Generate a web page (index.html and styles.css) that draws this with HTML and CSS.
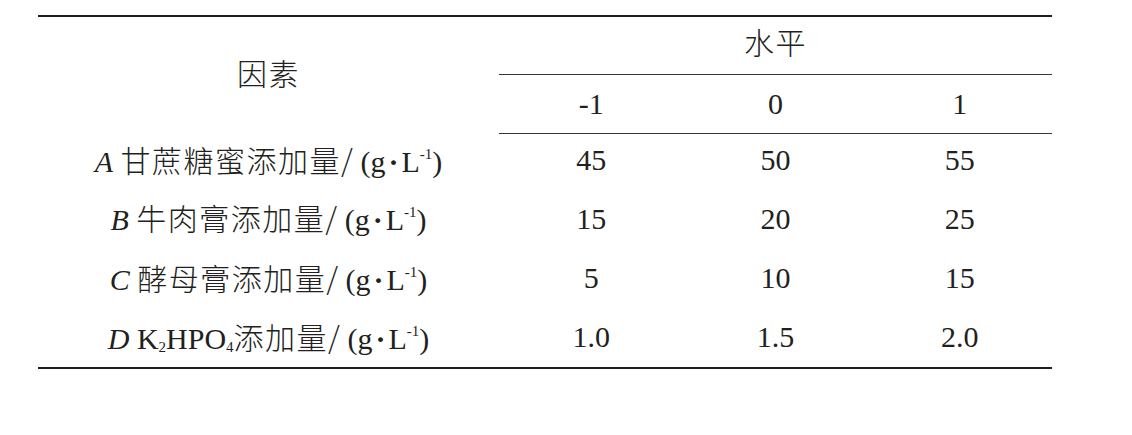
FILE: index.html
```html
<!DOCTYPE html>
<html lang="zh-CN">
<head>
  <meta charset="UTF-8">
  <meta name="viewport" content="width=device-width, initial-scale=1.0">
  <title>因素水平表</title>
  <link rel="stylesheet" href="styles.css">
</head>
<body>
  <table class="factor-table">
    <colgroup>
      <col class="col-factor">
      <col class="col-level">
      <col class="col-level">
      <col class="col-level">
    </colgroup>
    <thead>
      <tr class="head-top">
        <th rowspan="2" class="factor-title"><span class="zh">因素</span></th>
        <th colspan="3" class="level-title"><span class="zh">水平</span></th>
      </tr>
      <tr class="head-levels">
        <th>-1</th>
        <th>0</th>
        <th>1</th>
      </tr>
    </thead>
    <tbody>
      <tr>
        <td class="label"><i>A</i> <span class="zh">甘蔗糖蜜添加量/</span><span class="paren">(</span>g<span class="dot">·</span>L<sup>-1</sup>)</td>
        <td>45</td>
        <td>50</td>
        <td>55</td>
      </tr>
      <tr>
        <td class="label"><i>B</i> <span class="zh">牛肉膏添加量/</span><span class="paren">(</span>g<span class="dot">·</span>L<sup>-1</sup>)</td>
        <td>15</td>
        <td>20</td>
        <td>25</td>
      </tr>
      <tr>
        <td class="label"><i>C</i> <span class="zh">酵母膏添加量/</span><span class="paren">(</span>g<span class="dot">·</span>L<sup>-1</sup>)</td>
        <td>5</td>
        <td>10</td>
        <td>15</td>
      </tr>
      <tr>
        <td class="label"><i>D</i> K<sub>2</sub>HPO<sub>4</sub><span class="zh">添加量/</span><span class="paren">(</span>g<span class="dot">·</span>L<sup>-1</sup>)</td>
        <td>1.0</td>
        <td>1.5</td>
        <td>2.0</td>
      </tr>
    </tbody>
  </table>
</body>
</html>
```

FILE: styles.css
```css
* {
  box-sizing: border-box;
}
html, body {
  margin: 0;
  padding: 0;
  background: #fff;
}
body {
  padding: 15px 0 0 38px;
  font-family: "Liberation Serif", "Noto Sans CJK SC", serif;
  font-size: 30px;
  color: #231f20;
}

.factor-table {
  width: 1014px;
  border-collapse: collapse;
  table-layout: fixed;
  border-top: 2px solid #231f20;
  border-bottom: 2px solid #231f20;
}

.col-factor {
  width: 461px;
}

.factor-table th,
.factor-table td {
  padding: 0;
  text-align: center;
  font-weight: normal;
  line-height: 1;
  white-space: nowrap;
}

.zh {
  font-family: "Noto Sans CJK SC", sans-serif;
  font-weight: 300;
  letter-spacing: 1.5px;
}

/* 表头 */
.head-top th {
  height: 58px;
}
.factor-title {
  padding-bottom: 4px !important;
}
.level-title {
  padding-bottom: 6px !important;
  border-bottom: 1px solid #3a3637;
}
.head-levels th {
  height: 59px;
  border-bottom: 1px solid #3a3637;
}

/* 数据行 */
.factor-table tbody td {
  height: 59.5px;
}
.factor-table tbody tr:first-child td {
  height: 56px;
  padding-bottom: 2px;
}

.label i {
  font-style: italic;
}
.label sup,
.label sub {
  font-size: 15px;
  line-height: 0;
}
.label sup {
  vertical-align: 13px;
}
.label sub {
  vertical-align: -3px;
}
.paren {
  padding-left: 6px;
}
.dot {
  display: inline-block;
  padding: 0 3px;
  font-weight: bold;
}
```
